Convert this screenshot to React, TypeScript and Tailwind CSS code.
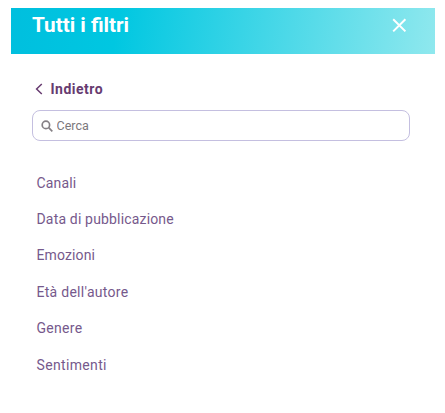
const filters = [
  { label: "Canali", spacing: "tracking-[0.15px]" },
  { label: "Data di pubblicazione", spacing: "tracking-[0.17px]" },
  { label: "Emozioni", spacing: "tracking-[0.12px]" },
  { label: "Età dell'autore", spacing: "tracking-[0.28px]" },
  { label: "Genere", spacing: "tracking-[0.3px]" },
  { label: "Sentimenti", spacing: "tracking-[0.35px]" },
];

function Header() {
  return (
    <header className="flex h-[46px] items-start justify-between bg-linear-[98deg,#00bfde_0%,#00c7e1_25%,#8fe8ee_100%] pl-[21px] pr-7 pt-[3px] text-white">
      <h1 className="text-[20.7px] font-bold leading-7">Tutti i filtri</h1>
      <button type="button" aria-label="Chiudi" className="mt-[7px]">
        <svg width="15" height="15" viewBox="0 0 15 15" fill="none" stroke="currentColor" strokeWidth="2">
          <path d="M1.2 1.2 13.4 13.4M13.4 1.2 1.2 13.4" />
        </svg>
      </button>
    </header>
  );
}

function SearchField() {
  return (
    <label className="flex h-[31px] w-[378px] items-center rounded-lg border border-[#c4bfe0] pl-2">
      <svg width="12" height="12" viewBox="0 0 12 12" fill="none" stroke="#858085" strokeWidth="1.7">
        <circle cx="4.9" cy="4.9" r="3.7" />
        <path d="M7.7 7.7 11.3 11.3" />
      </svg>
      <input
        type="text"
        placeholder="Cerca"
        className="ml-1 flex-1 bg-transparent text-[12.5px] leading-4 outline-none placeholder:text-[#7c777c]"
      />
    </label>
  );
}

export default function App() {
  return (
    <div className="h-[413px] w-[445px] bg-white pl-[11px] pr-[10.5px] pt-2 font-['Roboto',sans-serif]">
      <Header />
      <main className="pl-[20.5px] pt-[25px]">
        <button type="button" className="flex h-5 items-center pl-[3px] text-[#673b70]">
          <svg width="8" height="12" viewBox="0 0 8 12" fill="none" stroke="currentColor" strokeWidth="1.5">
            <path d="M6.8 1 1.6 6 6.8 11" />
          </svg>
          <span className="ml-2 text-[14px] font-bold leading-5 tracking-[0.5px]">Indietro</span>
        </button>
        <div className="mt-[11px]">
          <SearchField />
        </div>
        <ul className="mt-[23.7px] pl-[5px]">
          {filters.map((filter) => (
            <li key={filter.label} className={`h-[36.4px] text-[14px] leading-[36.4px] text-[#76598c] ${filter.spacing}`}>
              {filter.label}
            </li>
          ))}
        </ul>
      </main>
    </div>
  );
}
